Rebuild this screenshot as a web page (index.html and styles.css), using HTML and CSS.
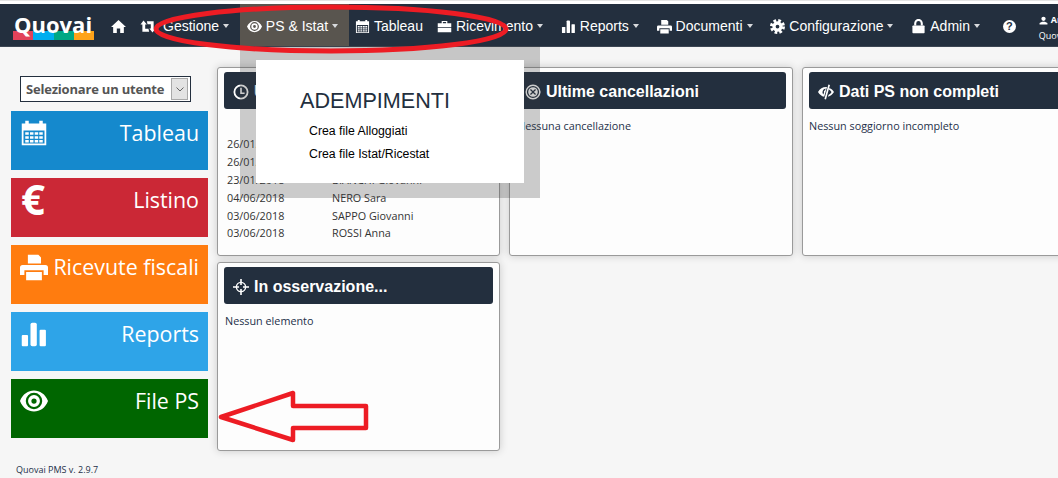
FILE: index.html
```html
<!DOCTYPE html>
<html lang="it">
<head>
  <meta charset="UTF-8" />
  <title>Quovai PMS</title>
  <link rel="stylesheet" href="styles.css">
</head>
<body>

  <!-- Icon set -->
  <svg class="icon-defs" width="0" height="0">
    <symbol id="i-home" viewBox="0 0 16 16"><path d="M8 1 16 8.600H13.700V15H9.800V10.200H6.200V15H2.300V8.600H0Z"/></symbol>
    <symbol id="i-retweet" viewBox="0 0 16 16"><path d="M3.200 1.500 6.800 5.800H5V10.500H8.500L9.200 13.500H2V5.800H0ZM12.800 14.500 9.400 10.200H11V5.500H7.500L6.800 2.500H14V10.200H16Z"/></symbol>
    <symbol id="i-eye" viewBox="0 0 16 16"><path fill-rule="evenodd" d="M0 8C3 0 13 0 16 8 13 16 3 16 0 8ZM8 3.300A4.700 4.700 0 1 0 8 12.700 4.700 4.700 0 1 0 8 3.300ZM8 4.600A3.400 3.400 0 1 1 8 11.400 3.400 3.400 0 1 1 8 4.600ZM8 6.500A1.500 1.500 0 1 0 8 9.500 1.500 1.500 0 1 0 8 6.500Z"/></symbol>
    <symbol id="i-calendar" viewBox="0 0 16 16"><path fill-rule="evenodd" d="M1 2.500H3V1H5V2.500H11V1H13V2.500H15V15H1ZM2 6.500V14H14V6.500Z"/><path d="M3 7.500h2V9H3zM5.700 7.500h2V9h-2zM8.400 7.500h2V9h-2zM11 7.500h2V9h-2zM3 9.800h2v1.500H3zM5.700 9.800h2v1.500h-2zM8.400 9.800h2v1.500h-2zM11 9.800h2v1.500h-2zM3 12h2v1.400H3zM5.700 12h2v1.400h-2zM8.400 12h2v1.400h-2zM11 12h2v1.400h-2z"/></symbol>
    <symbol id="i-case" viewBox="0 0 16 16"><path d="M.8 4.600H15.200V8.400H.8ZM.8 9.400H15.200V14.200H.8ZM5 4.600V2H11V4.600H9.700V3.300H6.300V4.600Z"/></symbol>
    <symbol id="i-chart" viewBox="0 0 16 16"><rect x="1" y="8.500" width="3.600" height="6.500" rx=".6"/><rect x="6" y="1.500" width="3.600" height="13.500" rx="1"/><rect x="11.200" y="5.500" width="3.600" height="9.500" rx=".6"/></symbol>
    <symbol id="i-print" viewBox="0 0 16 16"><path d="M4.500 1H10.500L12 2.500V6H4.500ZM1.500 6.800H14.500Q16 6.800 16 8.300V12.500H13.500V9.800H2.500V12.500H0V8.300Q0 6.800 1.500 6.800ZM3.500 10.800H12.500V15.500H3.500Z"/></symbol>
    <symbol id="i-cog" viewBox="0 0 16 16"><circle cx="8" cy="8" r="6.400" fill="none" stroke="currentColor" stroke-width="3.200" stroke-dasharray="2.800 2.230"/><path fill-rule="evenodd" d="M8 2.500A5.500 5.500 0 1 0 8 13.500 5.500 5.500 0 1 0 8 2.500ZM8 6A2 2 0 1 1 8 10 2 2 0 1 1 8 6Z"/></symbol>
    <symbol id="i-lock" viewBox="0 0 16 16"><rect x="1.500" y="6.800" width="13" height="8.500" rx=".8"/><path d="M4.500 7V4.500A3.500 3.500 0 0 1 11.500 4.500V7" fill="none" stroke="currentColor" stroke-width="2.200"/></symbol>
    <symbol id="i-user" viewBox="0 0 16 16"><circle cx="8" cy="5" r="3.800"/><path d="M1 15V12.400L5.600 10H10.400L15 12.400V15Z"/></symbol>
    <symbol id="i-clock" viewBox="0 0 16 16"><path fill-rule="evenodd" d="M8 .5A7.500 7.500 0 1 0 8 15.500 7.500 7.500 0 1 0 8 .5ZM8 2.300A5.700 5.700 0 1 1 8 13.700 5.700 5.700 0 1 1 8 2.300Z"/><path d="M7.200 3.800H8.800V8.400H11.600V10H7.200Z"/></symbol>
    <symbol id="i-cancel" viewBox="0 0 16 16"><path fill-rule="evenodd" d="M8 .5A7.500 7.500 0 1 0 8 15.500 7.500 7.500 0 1 0 8 .5ZM8 1.900A6.100 6.100 0 1 1 8 14.100 6.100 6.100 0 1 1 8 1.900ZM8 3.200A4.800 4.800 0 1 0 8 12.800 4.800 4.800 0 1 0 8 3.200ZM5.900 5 8 7.100 10.100 5 11 5.900 8.900 8 11 10.100 10.100 11 8 8.900 5.900 11 5 10.100 7.100 8 5 5.900Z"/></symbol>
    <symbol id="i-target" viewBox="0 0 16 16"><circle cx="8" cy="8" r="4.600" fill="none" stroke="currentColor" stroke-width="1.400"/><path d="M7.200 0H8.800V6H7.200ZM7.200 10H8.800V16H7.200ZM0 7.200H6V8.800H0ZM10 7.200H16V8.800H10Z"/></symbol>
    <symbol id="i-eyeoff" viewBox="0 0 16 16"><path fill-rule="evenodd" d="M9 3.100 6.200 12.800C3.600 12.200 1.400 10.400 0 8 2 4.400 5.400 2.700 9 3.100ZM7.600 4.600A3.600 3.600 0 0 0 5.400 10.600L6 8.600A1.800 1.800 0 0 1 7.200 6.200Z"/><path d="M10.400 .6 12 1.100 8 15.400 6.400 14.900ZM11.400 4C13.300 4.800 14.900 6.200 16 8 14.700 10.300 12.500 12 10 12.800L10.500 10.900C11.900 10.300 12.800 9.300 13.500 8 12.800 6.900 11.900 6.100 10.900 5.600Z"/></symbol>
  </svg>

  <header class="topbar">
    <a class="logo">
      <span class="logo-name">Quovai</span>
      <span class="logo-bar"><i class="c-red"></i><i class="c-blue"></i><i class="c-green"></i><i class="c-orange"></i></span>
    </a>
    <nav class="menu">
      <a class="menu-item"><svg class="ico"><use href="#i-home"/></svg></a>
      <a class="menu-item has-caret"><svg class="ico ico-wide"><use href="#i-retweet"/></svg>Gestione</a>
      <a class="menu-item has-caret active"><svg class="ico"><use href="#i-eye"/></svg>PS &amp; Istat</a>
      <a class="menu-item menu-item-tight"><svg class="ico"><use href="#i-calendar"/></svg>Tableau</a>
      <a class="menu-item has-caret"><svg class="ico"><use href="#i-case"/></svg>Ricevimento</a>
      <a class="menu-item has-caret"><svg class="ico"><use href="#i-chart"/></svg>Reports</a>
      <a class="menu-item has-caret"><svg class="ico"><use href="#i-print"/></svg>Documenti</a>
      <a class="menu-item has-caret"><svg class="ico"><use href="#i-cog"/></svg>Configurazione</a>
      <a class="menu-item has-caret"><svg class="ico"><use href="#i-lock"/></svg>Admin</a>
      <a class="menu-item help"><span class="help-icon">?</span></a>
    </nav>
    <div class="account">
      <div class="account-name"><svg class="ico-small"><use href="#i-user"/></svg>Anna</div>
      <div class="account-hotel">Quovai</div>
    </div>
  </header>

  <div class="page">
    <aside class="sidebar">
      <div class="user-select">
        <span class="user-select-text">Selezionare un utente</span>
        <span class="user-select-arrow"><svg viewBox="0 0 8 5"><path d="M.5 .5 4 4 7.500 .5" fill="none" stroke="#444" stroke-width=".8"/></svg></span>
      </div>
      <a class="tile tile-blue"><svg class="tile-icon"><use href="#i-calendar"/></svg><span>Tableau</span></a>
      <a class="tile tile-red"><span class="tile-euro">€</span><span>Listino</span></a>
      <a class="tile tile-orange"><svg class="tile-icon"><use href="#i-print"/></svg><span>Ricevute fiscali</span></a>
      <a class="tile tile-sky"><svg class="tile-icon"><use href="#i-chart"/></svg><span>Reports</span></a>
      <a class="tile tile-green"><svg class="tile-icon"><use href="#i-eye"/></svg><span>File PS</span></a>
      <p class="version">Quovai PMS v. 2.9.7</p>
    </aside>

    <main class="cards">
      <section class="card">
        <h2 class="card-title"><svg class="ico-title"><use href="#i-clock"/></svg>Ultimi arrivi</h2>
        <table class="card-table">
          <tr><td>26/01/2018</td><td></td></tr>
          <tr><td>26/01/2018</td><td></td></tr>
          <tr><td>23/01/2018</td><td>BIANCHI Giovanni</td></tr>
          <tr><td>04/06/2018</td><td>NERO Sara</td></tr>
          <tr><td>03/06/2018</td><td>SAPPO Giovanni</td></tr>
          <tr><td>03/06/2018</td><td>ROSSI Anna</td></tr>
        </table>
      </section>
      <section class="card">
        <h2 class="card-title"><svg class="ico-title"><use href="#i-cancel"/></svg>Ultime cancellazioni</h2>
        <p class="card-text">Nessuna cancellazione</p>
      </section>
      <section class="card">
        <h2 class="card-title"><svg class="ico-title"><use href="#i-eyeoff"/></svg>Dati PS non completi</h2>
        <p class="card-text card-text-flush">Nessun soggiorno incompleto</p>
      </section>
      <section class="card">
        <h2 class="card-title"><svg class="ico-title"><use href="#i-target"/></svg>In osservazione...</h2>
        <p class="card-text">Nessun elemento</p>
      </section>
    </main>
  </div>

  <!-- Open dropdown of PS & Istat -->
  <div class="dropdown-shade">
    <div class="dropdown">
      <h3 class="dropdown-title">ADEMPIMENTI</h3>
      <a class="dropdown-link">Crea file Alloggiati</a>
      <a class="dropdown-link">Crea file Istat/Ricestat</a>
    </div>
  </div>

  <!-- Red marks drawn on the screenshot -->
  <svg class="marks" viewBox="0 0 1058 478">
    <ellipse cx="331" cy="29" rx="175" ry="22" fill="none" stroke="#ed1c24" stroke-width="5"/>
    <path d="M221 417 293 393V406H366V428H293V440Z" fill="none" stroke="#ed1c24" stroke-width="4.500" stroke-linejoin="round"/>
  </svg>

</body>
</html>
```

FILE: styles.css
```css
/* Basic Reset */
* {
  margin: 0;
  padding: 0;
  box-sizing: border-box;
}

body {
  position: relative;
  width: 1058px;
  height: 478px;
  overflow: hidden;
  background: #f6f6f6;
  color: #1d3049;
  font-family: "Open Sans", sans-serif;
  font-size: 10.8px;
}

.icon-defs {
  position: absolute;
}

svg {
  fill: currentColor;
}

/* Top bar */
.topbar {
  display: flex;
  align-items: center;
  height: 43px;
  margin-top: 4px;
  background: #232f3e;
  border-bottom: 1px solid #3c4653;
  color: #fff;
  box-shadow: 0 -3px 0 #fff, 0 -4px 0 #e4e4e4;
  font-family: "Liberation Sans", sans-serif;
  font-size: 14px;
}

.logo {
  display: block;
  position: relative;
  flex: none;
  width: 104px;
  height: 100%;
}

.logo-name {
  position: absolute;
  left: 14px;
  top: 5px;
  font-family: "Open Sans", sans-serif;
  font-size: 22px;
  font-weight: 700;
  line-height: 30px;
  z-index: 1;
}

.logo-bar {
  position: absolute;
  left: 13px;
  top: 27px;
  display: flex;
  width: 81px;
  height: 9px;
}

.logo-bar i {
  flex: 1;
}

.c-red { background: #e2425a; }
.c-blue { background: #00aeef; }
.c-green { background: #00a884; }
.c-orange { background: #ffa31a; }

.menu {
  display: flex;
  height: 100%;
}

.menu-item {
  display: flex;
  align-items: center;
  gap: 4px;
  padding: 2px 7px 0;
  height: 100%;
  white-space: nowrap;
}

.menu-item.has-caret {
  padding-right: 10.8px;
}

.menu-item.has-caret::after {
  content: "";
  border-top: 4px solid #d8dadd;
  border-left: 3.5px solid transparent;
  border-right: 3.5px solid transparent;
}

.menu-item.active {
  background: #59554f;
}

.menu-item-tight {
  padding-left: 6px;
}

.menu-item.help {
  padding: 2px 0 0 12px;
}

.help-icon {
  display: block;
  width: 13px;
  height: 13px;
  border-radius: 50%;
  background: #fff;
  color: #232f3e;
  font-size: 11px;
  font-weight: 700;
  line-height: 13px;
  text-align: center;
}

.ico {
  flex: none;
  width: 15px;
  height: 15px;
}

.ico-wide {
  width: 16px;
  margin-right: 3px;
}

.account {
  margin-left: 23px;
  font-family: "Open Sans", sans-serif;
  font-size: 9px;
  line-height: 16px;
  white-space: nowrap;
  padding-top: 6px;
}

.account-name {
  display: flex;
  align-items: center;
  gap: 3px;
  font-weight: 700;
}

.ico-small {
  width: 9px;
  height: 9px;
}

/* Page */
.page {
  display: flex;
}

/* Sidebar */
.sidebar {
  flex: none;
  width: 217px;
  padding: 29px 0 0 11px;
}

.user-select {
  display: flex;
  align-items: center;
  justify-content: space-between;
  width: 171px;
  height: 26px;
  margin: 0 0 9px 9px;
  padding: 1px 2px 1px 5px;
  background: #fff;
  border: 1px solid #232f3e;
  color: #555;
  font-size: 13px;
  font-weight: 700;
  letter-spacing: -0.2px;
}

.user-select-arrow {
  display: flex;
  align-items: center;
  justify-content: center;
  width: 17px;
  height: 22px;
  background: #e3e3e3;
  border: 1px solid #a9a9a9;
}

.user-select-arrow svg {
  width: 8px;
  height: 5px;
  fill: none;
}

.tile {
  display: flex;
  justify-content: space-between;
  width: 197px;
  height: 58.5px;
  margin-bottom: 8.5px;
  padding: 7px 9px 0 9px;
  color: #fff;
  font-size: 21.4px;
  line-height: 29px;
  white-space: nowrap;
}

.tile-icon {
  flex: none;
  width: 28px;
  height: 28px;
  margin-top: 1px;
}

.tile-euro {
  margin-left: 1px;
  font-size: 42px;
  font-weight: 700;
  line-height: 28px;
}

.tile-blue { background: #1589cd; }
.tile-red { background: #cb2836; }
.tile-orange { background: #ff7c0f; }
.tile-sky { background: #2ea4e8; }
.tile-green { background: #006600; }

.version {
  margin: 26px 0 0 5px;
  font-size: 9px;
  line-height: 12px;
}

/* Cards */
.cards {
  display: grid;
  grid-template-columns: 283px 284px 284px;
  grid-auto-rows: 189px;
  gap: 6px 9px;
  padding-top: 20px;
}

.card {
  padding: 4px 6px;
  background: #fdfdfd;
  border: 1px solid #9a9a9a;
  border-radius: 3px;
  box-shadow: 0 0 9px rgba(0, 0, 0, 0.18);
}

.card-title {
  display: flex;
  align-items: center;
  gap: 5px;
  height: 37px;
  padding: 2px 0 0 9px;
  background: #232f3e;
  border-radius: 3px;
  color: #fff;
  font-family: "Liberation Sans", sans-serif;
  font-size: 16px;
  font-weight: 700;
  white-space: nowrap;
}

.ico-title {
  flex: none;
  width: 16px;
  height: 16px;
}

.card-text {
  margin: 9px 0 0 1px;
  line-height: 15px;
}

.card-text-flush {
  margin-left: 0;
}

.card-table {
  margin: 26px 0 0 3px;
  border-collapse: collapse;
  color: #333;
}

.card-table td {
  height: 17.8px;
  padding: 0;
  white-space: nowrap;
}

.card-table td:first-child {
  width: 105px;
}

/* Dropdown */
.dropdown-shade {
  position: absolute;
  left: 240px;
  top: 46px;
  width: 300px;
  height: 152px;
  padding: 14px 16px;
  background: rgba(60, 60, 60, 0.26);
}

.dropdown {
  width: 268px;
  height: 123px;
  padding: 29px 0 0 44px;
  background: #fff;
  color: #000;
  font-family: "Liberation Sans", sans-serif;
}

.dropdown-title {
  margin-bottom: 8px;
  color: #232f3e;
  font-size: 21.6px;
  font-weight: 400;
  line-height: 23px;
}

.dropdown-link {
  display: block;
  margin-left: 9px;
  font-size: 12.3px;
  line-height: 23px;
}

/* Red marks */
.marks {
  position: absolute;
  left: 0;
  top: 0;
  width: 1058px;
  height: 478px;
  pointer-events: none;
}
```
